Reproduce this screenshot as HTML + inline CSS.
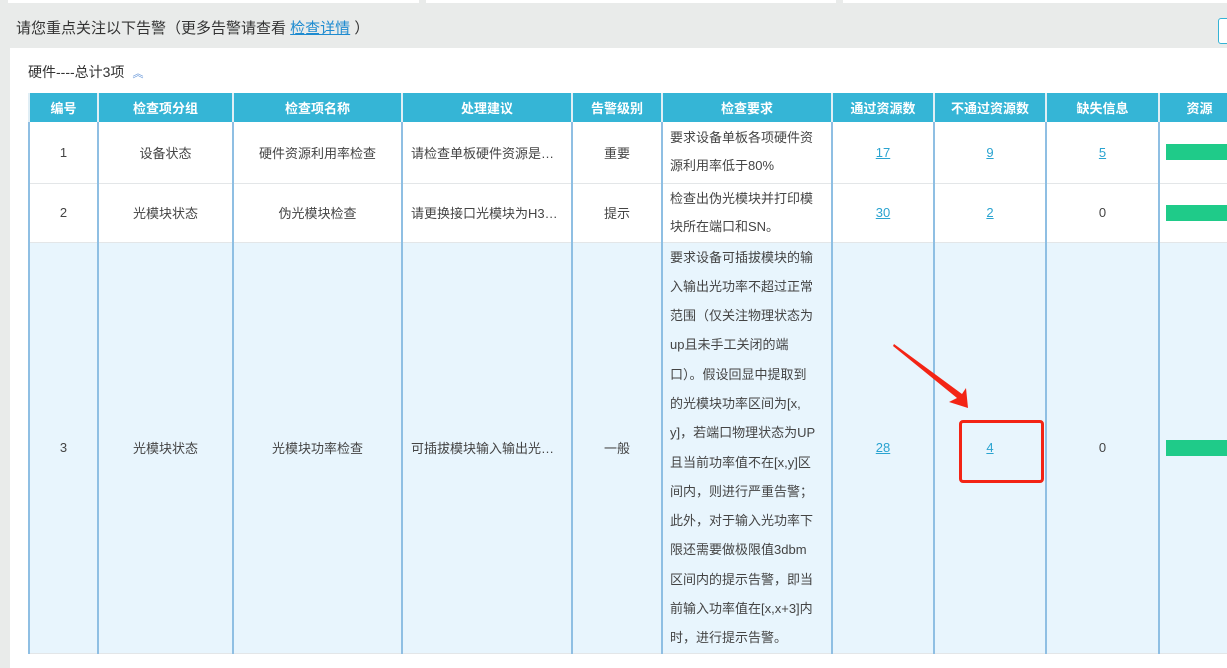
<!DOCTYPE html>
<html><head><meta charset="utf-8"><style>
*{margin:0;padding:0;box-sizing:border-box}
body{width:1227px;height:661px;overflow:hidden;background:#e9ebea;font-family:"Liberation Sans","Noto Sans CJK SC",sans-serif;color:#333;position:relative}
.strip{position:absolute;top:0;height:3px;background:#fff}
.title{position:absolute;left:16px;top:17px;font-size:15px;color:#333}
.title a{color:#1e8bd0;text-decoration:underline}
.btn{position:absolute;left:1218px;top:18px;width:20px;height:26px;border:1px solid #35b3d5;border-radius:3px;background:#fff}
.panel{position:absolute;left:10px;top:48px;width:1230px;height:620px;background:#fff}
.sub{position:absolute;left:28px;top:62px;font-size:14px;color:#333}
.sub span{color:#5b8fd6;font-size:11px;margin-left:8px}
table{position:absolute;left:28px;top:93px;width:1210px;border-collapse:collapse;table-layout:fixed;font-size:13px}
th{background:#35b5d6;color:#fff;font-weight:bold;height:29px;border-left:2px solid #e0eef5;font-size:13px;overflow:hidden;white-space:nowrap}
td{border-left:2px solid #8fbfe3;border-bottom:1px solid #e3e6e8;text-align:center;color:#444;overflow:hidden}
td.l{text-align:left;padding-left:8px;padding-right:6px;white-space:nowrap;overflow:hidden;text-overflow:ellipsis}
td.req{text-align:left;padding:0 0 0 7px;line-height:28px;color:#444;white-space:nowrap}
td a{color:#2aa3d0;text-decoration:underline}
.bar{height:16px;background:#1fcb89;margin-left:6px}
tr.hl td{background:#e8f5fd}
</style></head><body>
<div class="strip" style="left:8px;width:411px"></div>
<div class="strip" style="left:426px;width:410px"></div>
<div class="strip" style="left:843px;width:384px"></div>
<div class="title">请您重点关注以下告警（更多告警请查看 <a>检查详情</a> ）</div>
<div class="btn"></div>
<div class="panel"></div>
<div class="sub">硬件----总计3项<span>︽</span></div>
<table>
<colgroup><col style="width:69px"><col style="width:135px"><col style="width:169px"><col style="width:170px"><col style="width:90px"><col style="width:170px"><col style="width:102px"><col style="width:112px"><col style="width:113px"><col style="width:80px"></colgroup>
<tr><th>编号</th><th>检查项分组</th><th>检查项名称</th><th>处理建议</th><th>告警级别</th><th>检查要求</th><th>通过资源数</th><th>不通过资源数</th><th>缺失信息</th><th>资源</th></tr>
<tr style="height:61px"><td>1</td><td>设备状态</td><td>硬件资源利用率检查</td><td class="l">请检查单板硬件资源是否满足</td><td>重要</td><td class="req">要求设备单板各项硬件资<br>源利用率低于80%</td><td><a>17</a></td><td><a>9</a></td><td><a>5</a></td><td><div class="bar"></div></td></tr>
<tr style="height:59px"><td>2</td><td>光模块状态</td><td>伪光模块检查</td><td class="l">请更换接口光模块为H3C光模块</td><td>提示</td><td class="req">检查出伪光模块并打印模<br>块所在端口和SN。</td><td><a>30</a></td><td><a>2</a></td><td>0</td><td><div class="bar"></div></td></tr>
<tr class="hl" style="height:411px"><td>3</td><td>光模块状态</td><td>光模块功率检查</td><td class="l">可插拔模块输入输出光功率异常</td><td>一般</td><td class="req" style="line-height:29.3px">要求设备可插拔模块的输<br>入输出光功率不超过正常<br>范围（仅关注物理状态为<br>up且未手工关闭的端<br>口）。假设回显中提取到<br>的光模块功率区间为[x,<br>y]，若端口物理状态为UP<br>且当前功率值不在[x,y]区<br>间内，则进行严重告警；<br>此外，对于输入光功率下<br>限还需要做极限值3dbm<br>区间内的提示告警，即当<br>前输入功率值在[x,x+3]内<br>时，进行提示告警。</td><td><a>28</a></td><td><a>4</a></td><td>0</td><td><div class="bar"></div></td></tr>
</table>
<div style="position:absolute;left:959px;top:420px;width:85px;height:63px;border:3px solid #f32415;border-radius:4px"></div>
<svg style="position:absolute;left:0;top:0" width="1227" height="661"><polygon points="894,344 962,394 966,388 968,408 949,402 957,398 893,346" fill="#f32415"/></svg>
</body></html>
